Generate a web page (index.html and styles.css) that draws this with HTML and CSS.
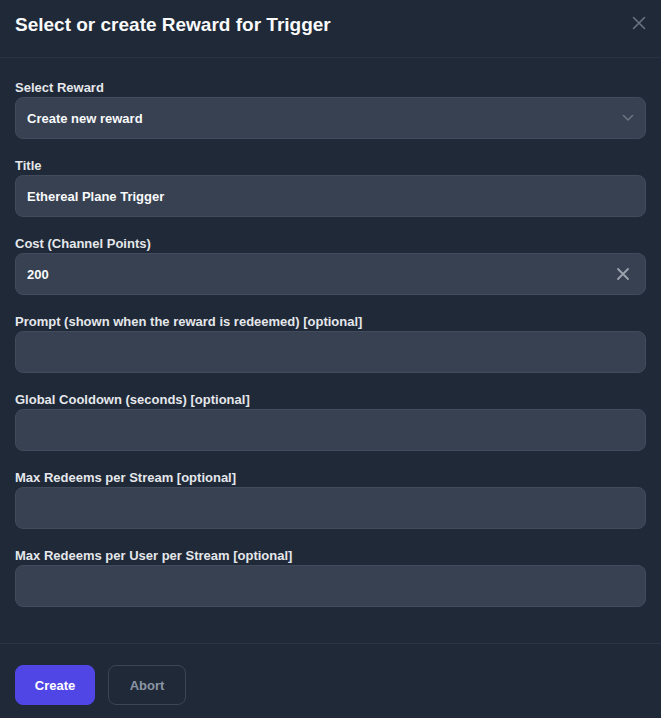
FILE: index.html
```html
<!DOCTYPE html>
<html>
<head>
<meta charset="utf-8">
<link rel="stylesheet" href="styles.css">
</head>
<body>
<div class="modal">
  <div class="header">
    <h1 class="title">Select or create Reward for Trigger</h1>
    <button class="close" aria-label="Close">
      <svg width="14" height="14" viewBox="0 0 14 14"><path d="M1.5 1.5L12.5 12.5M12.5 1.5L1.5 12.5" stroke="currentColor" stroke-width="1.6" stroke-linecap="round"/></svg>
    </button>
  </div>
  <div class="body">
    <div class="field">
      <label class="label">Select Reward</label>
      <div class="input select">
        <span>Create new reward</span>
        <svg class="chev" width="12" height="8" viewBox="0 0 12 8"><path d="M1.5 1.5L6 6L10.5 1.5" fill="none" stroke="currentColor" stroke-width="1.6" stroke-linecap="round" stroke-linejoin="round"/></svg>
      </div>
    </div>
    <div class="field">
      <label class="label">Title</label>
      <div class="input"><span>Ethereal Plane Trigger</span></div>
    </div>
    <div class="field">
      <label class="label">Cost (Channel Points)</label>
      <div class="input">
        <span>200</span>
        <svg class="clear" width="14" height="14" viewBox="0 0 14 14"><path d="M2 2L12 12M12 2L2 12" stroke="currentColor" stroke-width="1.8" stroke-linecap="round"/></svg>
      </div>
    </div>
    <div class="field">
      <label class="label">Prompt (shown when the reward is redeemed) [optional]</label>
      <div class="input"></div>
    </div>
    <div class="field">
      <label class="label">Global Cooldown (seconds) [optional]</label>
      <div class="input"></div>
    </div>
    <div class="field">
      <label class="label">Max Redeems per Stream [optional]</label>
      <div class="input"></div>
    </div>
    <div class="field">
      <label class="label">Max Redeems per User per Stream [optional]</label>
      <div class="input"></div>
    </div>
  </div>
  <div class="footer">
    <button class="btn primary">Create</button>
    <button class="btn secondary">Abort</button>
  </div>
</div>
</body>
</html>
```
FILE: styles.css
```css
html, body {
  margin: 0;
  padding: 0;
  background: #1f2937;
}
body {
  font-family: "Liberation Sans", Arial, sans-serif;
  color: #f3f4f6;
}
.modal {
  width: 661px;
  min-height: 718px;
  background: #1f2937;
}
.header {
  display: flex;
  align-items: flex-start;
  justify-content: space-between;
  height: 57px;
  padding: 0 15px;
  border-bottom: 1px solid #273244;
  box-sizing: content-box;
}
.title {
  margin: 0;
  padding-top: 13px;
  font-size: 19px;
  line-height: 24px;
  font-weight: 700;
  color: #f9fafb;
}
.close {
  background: none;
  border: none;
  padding: 0;
  margin-top: 16px;
  margin-right: 0;
  color: #6b7280;
  display: flex;
}
.body {
  padding: 21px 15px 36px;
  display: flex;
  flex-direction: column;
  gap: 18px;
}
.field {
  display: flex;
  flex-direction: column;
}
.label {
  font-size: 13px;
  line-height: 18px;
  font-weight: 700;
  color: #e5e7eb;
}
.input {
  height: 42px;
  box-sizing: border-box;
  background: #374151;
  border: 1px solid #414b5c;
  border-radius: 8px;
  display: flex;
  align-items: center;
  justify-content: space-between;
  padding: 0 16px 0 11px;
  font-size: 13px;
  font-weight: 700;
  color: #f9fafb;
}
.chev {
  color: #6b7280;
  margin-right: -5px;
}
.clear {
  color: #9ca3af;
  margin-right: -1px;
}
.footer {
  border-top: 1px solid #2c3648;
  padding: 21px 15px;
  display: flex;
  gap: 13px;
}
.btn {
  height: 40px;
  border-radius: 8px;
  font-family: "Liberation Sans", Arial, sans-serif;
  font-size: 13px;
  font-weight: 700;
}
.primary {
  width: 80px;
  background: #4f46e5;
  border: 1px solid #4f46e5;
  color: #ffffff;
}
.secondary {
  width: 78px;
  background: transparent;
  border: 1px solid #3b4556;
  color: #8b95a5;
  font-weight: 700;
}
```
